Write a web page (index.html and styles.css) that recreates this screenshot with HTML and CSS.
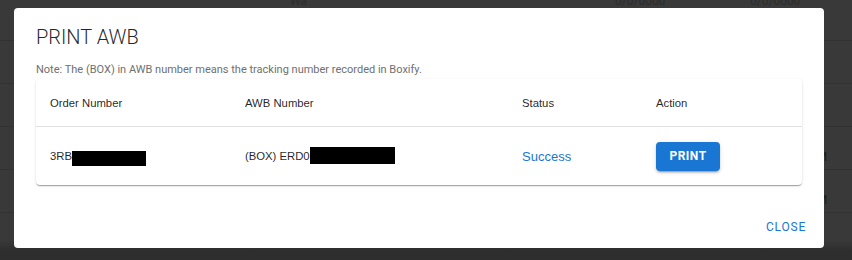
FILE: index.html
```html
<!DOCTYPE html>
<html>
<head>
<meta charset="utf-8">
<link rel="stylesheet" href="styles.css">
</head>
<body>
<div class="page">
  <div class="bg-row bg-top">
    <span class="bg-a">Wa</span><span class="bg-b">0/0/0000</span><span class="bg-c">0/0/0000</span>
  </div>
  <div class="bg-row"></div>
  <div class="bg-row"></div>
  <div class="bg-row"><span class="bg-m">M</span></div>
  <div class="bg-row"><span class="bg-m">M</span></div>
</div>
<div class="overlay">
  <div class="dialog">
    <h1 class="title">PRINT AWB</h1>
    <p class="note">Note: The (BOX) in AWB number means the tracking number recorded in Boxify.</p>
    <div class="table">
      <div class="row head">
        <div class="cell">Order Number</div>
        <div class="cell">AWB Number</div>
        <div class="cell">Status</div>
        <div class="cell">Action</div>
      </div>
      <div class="row body">
        <div class="cell">3RB<span class="redact r1"></span></div>
        <div class="cell">(BOX) ERD0<span class="redact r2"></span></div>
        <div class="cell status">Success</div>
        <div class="cell"><button class="btn-print">PRINT</button></div>
      </div>
    </div>
    <div class="actions">
      <button class="btn-close">CLOSE</button>
    </div>
  </div>
</div>
</body>
</html>
```
FILE: styles.css
```css
* { box-sizing: border-box; }
html, body { margin: 0; padding: 0; }
body {
  width: 852px;
  height: 260px;
  overflow: hidden;
  background: #393939;
  font-family: Roboto, "Liberation Sans", Arial, sans-serif;
  position: relative;
}
.page {
  display: flex;
  flex-direction: column;
}
.bg-row {
  height: 43px;
  border-bottom: 1px solid #323232;
  position: relative;
  font-size: 12px;
  color: #2c2c2c;
}
.bg-top { height: 41px; }
.bg-a { position: absolute; left: 290px; top: -6px; }
.bg-b { position: absolute; left: 615px; top: -6px; }
.bg-c { position: absolute; left: 750px; top: -6px; }
.bg-m { position: absolute; left: 816px; top: 22px; color: #1e1e1e; font-size: 13px; }
.overlay {
  position: absolute;
  inset: 0;
  background: linear-gradient(#3b3b3b00, #3b3b3b00 240px, #2e2e2e 250px);
}
.dialog {
  position: absolute;
  left: 14px;
  top: 8px;
  width: 810px;
  height: 240px;
  background: #fff;
  border-radius: 4px;
  padding: 0 22px;
  display: flex;
  flex-direction: column;
}
.title {
  margin: 0;
  padding-top: 13px;
  font-size: 20px;
  line-height: 32px;
  font-weight: 300;
  color: rgba(0,0,0,0.87);
}
.note {
  margin: 10px 0 0;
  font-size: 11px;
  line-height: 14px;
  color: #6f6f6f;
}
.table {
  margin-top: 2px;
  border-radius: 4px;
  box-shadow: 0 2px 1px -1px rgba(0,0,0,.2), 0 1px 1px 0 rgba(0,0,0,.14), 0 1px 3px 0 rgba(0,0,0,.12);
  font-family: "Liberation Sans", Arial, sans-serif;
  font-size: 11.3px;
  color: rgba(0,0,0,0.87);
}
.row {
  display: grid;
  grid-template-columns: 195px 277px 134px 1fr;
  align-items: center;
  padding-left: 14px;
}
.head { height: 48px; border-bottom: 1px solid #e0e0e0; }
.body { height: 58px; }
.cell { display: flex; align-items: center; }
.redact { display: inline-block; background: #000; }
.r1 { width: 74px; height: 15px; margin-top: 4px; }
.r2 { width: 85px; height: 17px; margin-top: -2px; }
.status { color: #1976d2; font-size: 13px; }
.btn-print {
  width: 64px;
  height: 29px;
  background: #1976d2;
  color: #fff;
  border: 0;
  border-radius: 4px;
  font-family: Roboto, "Liberation Sans", Arial, sans-serif;
  font-size: 12px;
  font-weight: 700;
  letter-spacing: 0.5px;
  box-shadow: 0 3px 1px -2px rgba(0,0,0,.2), 0 2px 2px 0 rgba(0,0,0,.14), 0 1px 5px 0 rgba(0,0,0,.12);
  padding: 0;
}
.actions {
  margin-top: auto;
  display: flex;
  justify-content: flex-end;
  padding-bottom: 8px;
}
.btn-close {
  background: none;
  border: 0;
  color: #1976d2;
  font-family: Roboto, "Liberation Sans", Arial, sans-serif;
  font-size: 12px;
  font-weight: 400;
  letter-spacing: 0.8px;
  padding: 6px 0;
  margin-right: -4px;
}
```
